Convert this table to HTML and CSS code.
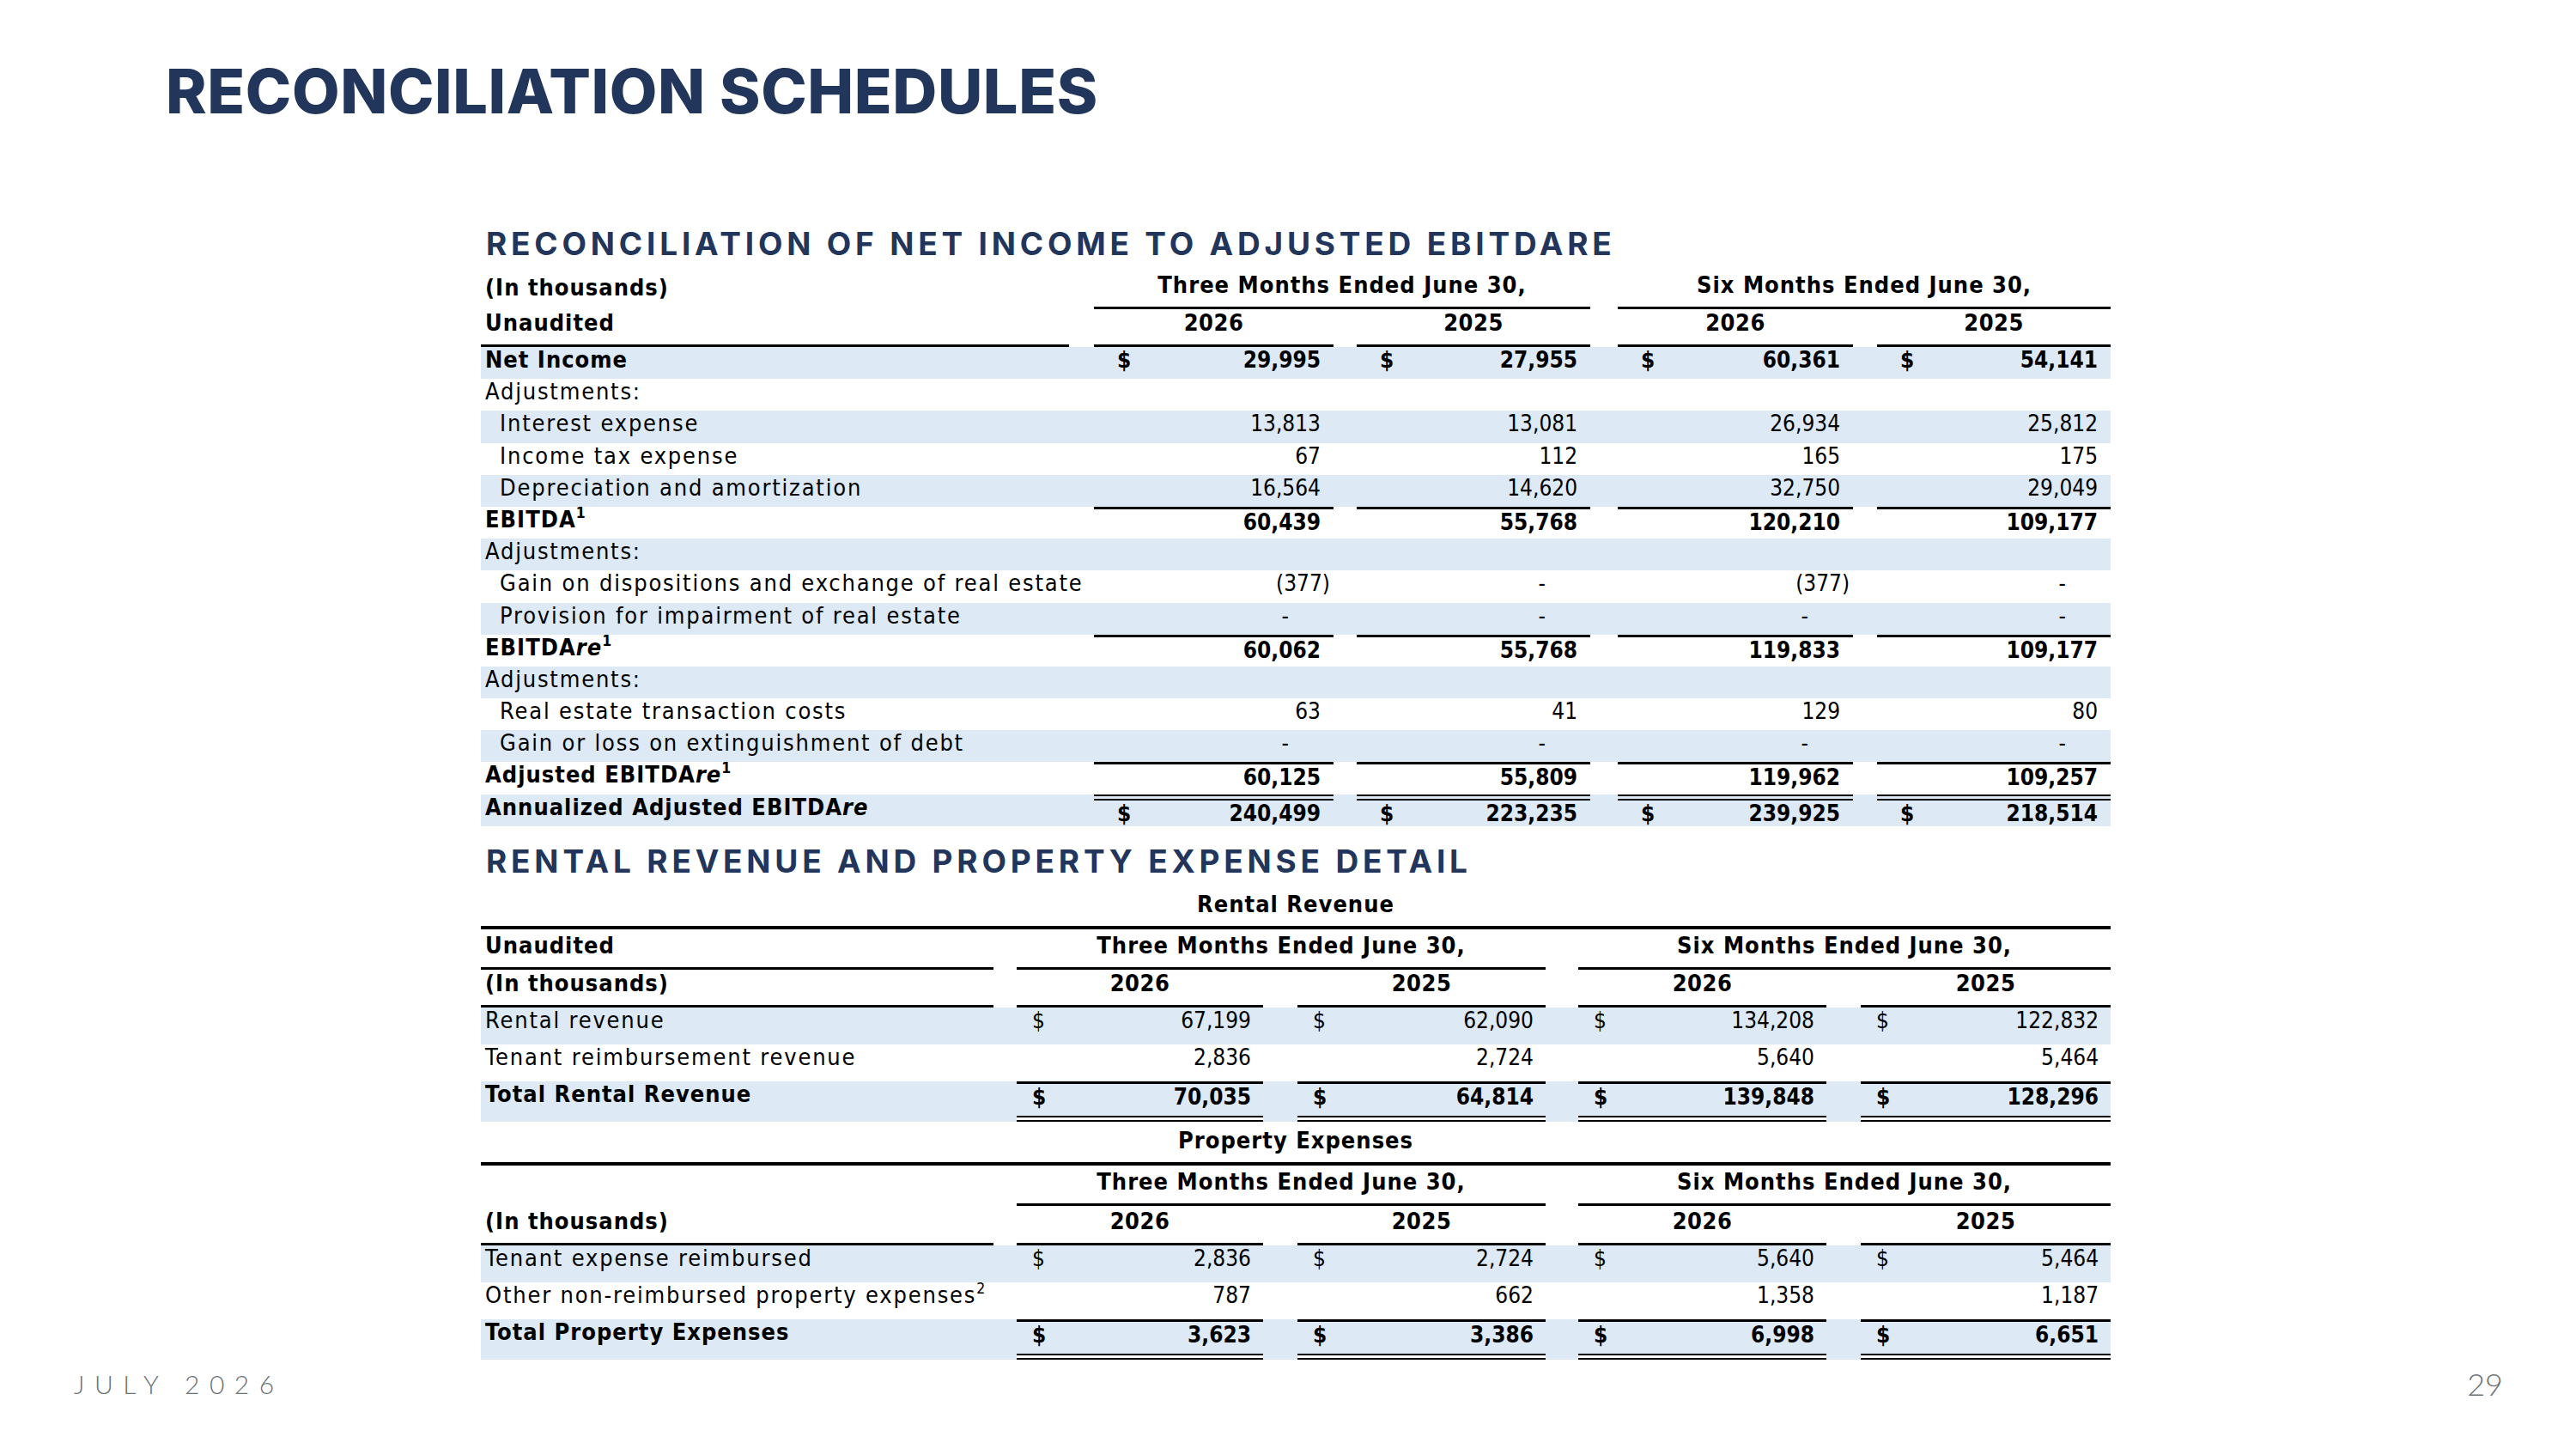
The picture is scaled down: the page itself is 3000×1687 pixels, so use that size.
FILE: index.html
```html
<!DOCTYPE html>
<html>
<head>
<title>Reconciliation Schedules</title>
<link rel="stylesheet" href="styles.css">
</head>
<body>
<div class="slide">
  <h1>RECONCILIATION SCHEDULES</h1>
  <div class="content">
    <h2>RECONCILIATION OF NET INCOME TO ADJUSTED EBITDARE</h2>
    <table class="fin t1">
      <colgroup>
        <col style="width:685px"><col style="width:29px"><col style="width:279px"><col style="width:27px"><col style="width:272px"><col style="width:32px"><col style="width:274px"><col style="width:28px"><col style="width:272px">
      </colgroup>
      <tr class="hd h48">
        <th class="lbl b">(In thousands)</th><td></td>
        <th colspan="3" class="grp rule">Three Months Ended June 30,</th><td></td>
        <th colspan="3" class="grp rule">Six Months Ended June 30,</th>
      </tr>
      <tr class="hd h44">
        <th class="lbl b rule">Unaudited</th><td></td>
        <th class="yr rule">2026</th><td></td><th class="yr rule">2025</th><td></td>
        <th class="yr rule">2026</th><td></td><th class="yr rule">2025</th>
      </tr>
      <tr class="band b">
        <td class="lbl">Net Income</td><td></td>
        <td class="v"><span class="cur">$</span>29,995</td><td></td>
        <td class="v"><span class="cur">$</span>27,955</td><td></td>
        <td class="v"><span class="cur">$</span>60,361</td><td></td>
        <td class="v"><span class="cur">$</span>54,141</td>
      </tr>
      <tr>
        <td class="lbl">Adjustments:</td><td></td><td></td><td></td><td></td><td></td><td></td><td></td><td></td>
      </tr>
      <tr class="band">
        <td class="lbl ind">Interest expense</td><td></td>
        <td class="v">13,813</td><td></td><td class="v">13,081</td><td></td>
        <td class="v">26,934</td><td></td><td class="v">25,812</td>
      </tr>
      <tr>
        <td class="lbl ind">Income tax expense</td><td></td>
        <td class="v">67</td><td></td><td class="v">112</td><td></td>
        <td class="v">165</td><td></td><td class="v">175</td>
      </tr>
      <tr class="band">
        <td class="lbl ind">Depreciation and amortization</td><td></td>
        <td class="v">16,564</td><td></td><td class="v">14,620</td><td></td>
        <td class="v">32,750</td><td></td><td class="v">29,049</td>
      </tr>
      <tr class="b sub">
        <td class="lbl">EBITDA<sup>1</sup></td><td></td>
        <td class="v">60,439</td><td></td><td class="v">55,768</td><td></td>
        <td class="v">120,210</td><td></td><td class="v">109,177</td>
      </tr>
      <tr class="band">
        <td class="lbl">Adjustments:</td><td></td><td></td><td></td><td></td><td></td><td></td><td></td><td></td>
      </tr>
      <tr>
        <td class="lbl ind">Gain on dispositions and exchange of real estate</td><td></td>
        <td class="v neg">(377)</td><td></td><td class="v dash">-</td><td></td>
        <td class="v neg">(377)</td><td></td><td class="v dash">-</td>
      </tr>
      <tr class="band">
        <td class="lbl ind">Provision for impairment of real estate</td><td></td>
        <td class="v dash">-</td><td></td><td class="v dash">-</td><td></td>
        <td class="v dash">-</td><td></td><td class="v dash">-</td>
      </tr>
      <tr class="b sub">
        <td class="lbl">EBITDA<i>re</i><sup>1</sup></td><td></td>
        <td class="v">60,062</td><td></td><td class="v">55,768</td><td></td>
        <td class="v">119,833</td><td></td><td class="v">109,177</td>
      </tr>
      <tr class="band">
        <td class="lbl">Adjustments:</td><td></td><td></td><td></td><td></td><td></td><td></td><td></td><td></td>
      </tr>
      <tr>
        <td class="lbl ind">Real estate transaction costs</td><td></td>
        <td class="v">63</td><td></td><td class="v">41</td><td></td>
        <td class="v">129</td><td></td><td class="v">80</td>
      </tr>
      <tr class="band">
        <td class="lbl ind">Gain or loss on extinguishment of debt</td><td></td>
        <td class="v dash">-</td><td></td><td class="v dash">-</td><td></td>
        <td class="v dash">-</td><td></td><td class="v dash">-</td>
      </tr>
      <tr class="b sub">
        <td class="lbl">Adjusted EBITDA<i>re</i><sup>1</sup></td><td></td>
        <td class="v">60,125</td><td></td><td class="v">55,809</td><td></td>
        <td class="v">119,962</td><td></td><td class="v">109,257</td>
      </tr>
      <tr class="band b dbl">
        <td class="lbl">Annualized Adjusted EBITDA<i>re</i></td><td></td>
        <td class="v"><span class="cur">$</span>240,499</td><td></td>
        <td class="v"><span class="cur">$</span>223,235</td><td></td>
        <td class="v"><span class="cur">$</span>239,925</td><td></td>
        <td class="v"><span class="cur">$</span>218,514</td>
      </tr>
    </table>

    <h2 class="second">RENTAL REVENUE AND PROPERTY EXPENSE DETAIL</h2>
    <table class="fin t2">
      <colgroup>
        <col style="width:597px"><col style="width:27px"><col style="width:287px"><col style="width:40px"><col style="width:289px"><col style="width:38px"><col style="width:289px"><col style="width:40px"><col style="width:291px">
      </colgroup>
      <tr class="hd h55">
        <th colspan="9" class="title thick">Rental Revenue</th>
      </tr>
      <tr class="hd h47">
        <th class="lbl b rule">Unaudited</th><td></td>
        <th colspan="3" class="grp rule">Three Months Ended June 30,</th><td></td>
        <th colspan="3" class="grp rule">Six Months Ended June 30,</th>
      </tr>
      <tr class="hd h44">
        <th class="lbl b rule">(In thousands)</th><td></td>
        <th class="yr rule">2026</th><td></td><th class="yr rule">2025</th><td></td>
        <th class="yr rule">2026</th><td></td><th class="yr rule">2025</th>
      </tr>
      <tr class="band">
        <td class="lbl">Rental revenue</td><td></td>
        <td class="v"><span class="cur">$</span>67,199</td><td></td>
        <td class="v"><span class="cur">$</span>62,090</td><td></td>
        <td class="v"><span class="cur">$</span>134,208</td><td></td>
        <td class="v"><span class="cur">$</span>122,832</td>
      </tr>
      <tr>
        <td class="lbl">Tenant reimbursement revenue</td><td></td>
        <td class="v">2,836</td><td></td><td class="v">2,724</td><td></td>
        <td class="v">5,640</td><td></td><td class="v">5,464</td>
      </tr>
      <tr class="band b total">
        <td class="lbl">Total Rental Revenue</td><td></td>
        <td class="v"><span class="cur">$</span>70,035</td><td></td>
        <td class="v"><span class="cur">$</span>64,814</td><td></td>
        <td class="v"><span class="cur">$</span>139,848</td><td></td>
        <td class="v"><span class="cur">$</span>128,296</td>
      </tr>
      <tr class="hd h51">
        <th colspan="9" class="title thick">Property Expenses</th>
      </tr>
      <tr class="hd h47">
        <th class="lbl"></th><td></td>
        <th colspan="3" class="grp rule">Three Months Ended June 30,</th><td></td>
        <th colspan="3" class="grp rule">Six Months Ended June 30,</th>
      </tr>
      <tr class="hd h46">
        <th class="lbl b rule">(In thousands)</th><td></td>
        <th class="yr rule">2026</th><td></td><th class="yr rule">2025</th><td></td>
        <th class="yr rule">2026</th><td></td><th class="yr rule">2025</th>
      </tr>
      <tr class="band">
        <td class="lbl">Tenant expense reimbursed</td><td></td>
        <td class="v"><span class="cur">$</span>2,836</td><td></td>
        <td class="v"><span class="cur">$</span>2,724</td><td></td>
        <td class="v"><span class="cur">$</span>5,640</td><td></td>
        <td class="v"><span class="cur">$</span>5,464</td>
      </tr>
      <tr>
        <td class="lbl">Other non-reimbursed property expenses<sup>2</sup></td><td></td>
        <td class="v">787</td><td></td><td class="v">662</td><td></td>
        <td class="v">1,358</td><td></td><td class="v">1,187</td>
      </tr>
      <tr class="band b total">
        <td class="lbl">Total Property Expenses</td><td></td>
        <td class="v"><span class="cur">$</span>3,623</td><td></td>
        <td class="v"><span class="cur">$</span>3,386</td><td></td>
        <td class="v"><span class="cur">$</span>6,998</td><td></td>
        <td class="v"><span class="cur">$</span>6,651</td>
      </tr>
    </table>
  </div>
  <div class="footer">
    <span class="date">JULY 2026</span>
    <span class="page">29</span>
  </div>
</div>
</body>
</html>
```

FILE: styles.css
```css
* {
	box-sizing: border-box;
}
html, body {
	margin: 0;
	padding: 0;
	background: #ffffff;
}
.slide {
	width: 3000px;
	height: 1687px;
	display: flex;
	flex-direction: column;
	overflow: hidden;
}
h1 {
	margin: 70px 0 0 193px;
	font: 800 72px/72px Inter, "Liberation Sans", sans-serif;
	letter-spacing: 0.6px;
	color: #22365c;
}
.content {
	width: 1898px;
	margin-left: 560px;
}
h2 {
	margin: 123px 0 10px 6px;
	font: 700 37px/37px Inter, "Liberation Sans", sans-serif;
	letter-spacing: 4.8px;
	color: #22365c;
}
h2.second {
	margin-top: 22px;
	margin-bottom: 6px;
}

/* financial tables */
table.fin {
	border-collapse: separate;
	border-spacing: 0;
	table-layout: fixed;
	width: 1898px;
	font-family: "DejaVu Sans Condensed", "DejaVu Sans", sans-serif;
	font-stretch: condensed;
	font-size: 26px;
	color: #000000;
}
.fin td, .fin th {
	padding: 0;
	line-height: 30px;
	vertical-align: top;
	white-space: nowrap;
	font-weight: normal;
	text-align: left;
}
.fin tr {
	height: 37.2px;
}
.t2 tr {
	height: 43px;
}
.fin tr.h44 { height: 44px; }
.fin tr.h46 { height: 46px; }
.fin tr.h47 { height: 47px; }
.fin tr.h48 { height: 48px; }
.fin tr.h51 { height: 51px; }
.fin tr.h55 { height: 55px; }
.fin tr.hd th, .fin tr.hd td {
	vertical-align: bottom;
	padding-bottom: 10px;
	font-weight: bold;
}
.fin .b td, .fin .b th, .fin th.b {
	font-weight: bold;
}
.fin .lbl {
	padding-left: 5px;
	font-size: 27px;
	letter-spacing: 1.8px;
}
.fin .b .lbl, .fin th.lbl {
	letter-spacing: 1px;
}
.fin .ind {
	padding-left: 22px;
}
.fin th.grp, .fin th.yr, .fin th.title {
	text-align: center;
	font-size: 27px;
	letter-spacing: 1px;
}
.fin th.yr {
	letter-spacing: 0.5px;
}
.fin .rule {
	border-bottom: 3px solid #000000;
}
.fin .thick {
	border-bottom: 4px solid #000000;
}
.band td {
	background: #dde9f5;
}
.fin td.v {
	text-align: right;
	padding: 0 15px 0 27px;
}
.t2 td.v {
	padding: 0 14px 0 18px;
}
.fin td.v.dash {
	padding-right: 52px;
}
.fin td.v.neg {
	padding-right: 4px;
}
.cur {
	float: left;
}
.sub td.v {
	border-top: 3px solid #000000;
}
.dbl td.v {
	border-top: 7px double #000000;
}
.total td.v {
	border-top: 3px solid #000000;
	border-bottom: 7px double #000000;
	background-clip: padding-box;
}
.t2 tr.total {
	height: 47px;
}
.fin sup {
	font-size: 65%;
	line-height: 0;
	vertical-align: 0.6em;
	letter-spacing: 0;
}
.fin i {
	font-style: italic;
}

.footer {
	margin-top: auto;
	display: flex;
	justify-content: space-between;
	align-items: center;
	padding: 0 85px 56px 86px;
	font: 300 30px/40px Lato, "Open Sans", sans-serif;
	color: #6b7278;
}
.date {
	letter-spacing: 11.5px;
}
.page {
	font-size: 36px;
}
```
